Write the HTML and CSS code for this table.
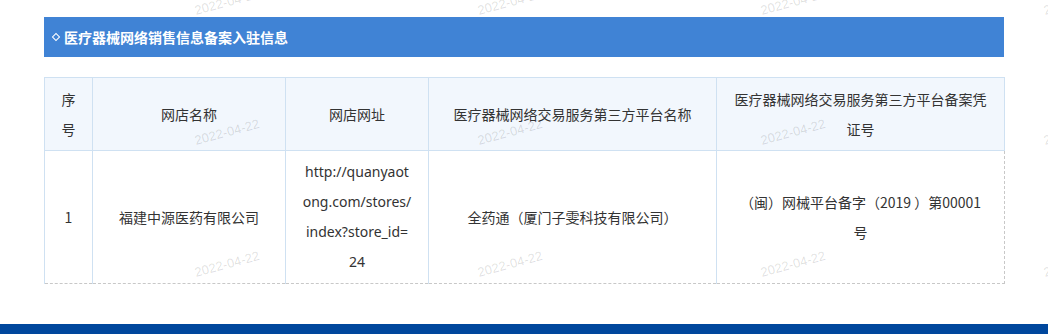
FILE: index.html
```html
<!DOCTYPE html>
<html lang="zh-CN">
<head>
<meta charset="utf-8">
<title>医疗器械网络销售信息备案入驻信息</title>
<link rel="stylesheet" href="styles.css">
</head>
<body>
<div class="page">
  <div class="wrap">
    <div class="title"><span class="diamond"></span><span class="title-text">医疗器械网络销售信息备案入驻信息</span></div>
    <table class="info">
      <colgroup>
        <col class="c1"><col class="c2"><col class="c3"><col class="c4"><col class="c5">
      </colgroup>
      <thead>
        <tr>
          <th>序号</th>
          <th>网店名称</th>
          <th>网店网址</th>
          <th>医疗器械网络交易服务第三方平台名称</th>
          <th>医疗器械网络交易服务第三方平台备案凭证号</th>
        </tr>
      </thead>
      <tbody>
        <tr>
          <td>1</td>
          <td>福建中源医药有限公司</td>
          <td class="url">http://quanyaotong.com/stores/index?store_id=24</td>
          <td>全药通（厦门子雯科技有限公司）</td>
          <td>（闽）网械平台备字（2019 ）第00001号</td>
        </tr>
      </tbody>
    </table>
  </div>
  <div class="footer"></div>
</div>
<div class="watermarks" aria-hidden="true">
  <span class="wm" style="left:227px;top:2px">2022-04-22</span>
  <span class="wm" style="left:510px;top:2px">2022-04-22</span>
  <span class="wm" style="left:793px;top:2px">2022-04-22</span>
  <span class="wm" style="left:1076px;top:2px">2022-04-22</span>
  <span class="wm" style="left:227px;top:132px">2022-04-22</span>
  <span class="wm" style="left:510px;top:132px">2022-04-22</span>
  <span class="wm" style="left:793px;top:132px">2022-04-22</span>
  <span class="wm" style="left:1076px;top:132px">2022-04-22</span>
  <span class="wm" style="left:227px;top:264px">2022-04-22</span>
  <span class="wm" style="left:510px;top:264px">2022-04-22</span>
  <span class="wm" style="left:793px;top:264px">2022-04-22</span>
  <span class="wm" style="left:1076px;top:264px">2022-04-22</span>
</div>
</body>
</html>
```

FILE: styles.css
```css
html, body {
  margin: 0;
  padding: 0;
  background: #fff;
}
body {
  font-family: "Noto Sans", "Noto Sans CJK SC", sans-serif;
  color: #333;
  font-size: 14px;
  overflow: hidden;
}
.page {
  position: relative;
}
.wrap {
  width: 960px;
  margin: 0 auto;
  padding-top: 17px;
}
.title {
  height: 40px;
  background: #4083d5;
  color: #fff;
  font-family: "Noto Sans CJK SC", sans-serif;
  font-weight: bold;
  font-size: 14px;
  display: flex;
  align-items: center;
  padding-left: 9px;
}
.diamond {
  width: 4px;
  height: 4px;
  border: 1px solid #fff;
  transform: rotate(45deg);
  margin-right: 5px;
}
.info {
  margin-top: 20px;
  width: 960px;
  table-layout: fixed;
  border-collapse: collapse;
}
.c1 { width: 48px; }
.c2 { width: 193px; }
.c3 { width: 143px; }
.c4 { width: 288px; }
.c5 { width: 288px; }
.info th, .info td {
  border: 1px solid #cfe1f2;
  padding: 6px 15px;
  line-height: 30px;
  text-align: center;
  font-weight: normal;
  font-size: 14px;
  color: #333;
  font-family: "Noto Sans CJK SC", sans-serif;
}
.info th {
  background: #f2f7fd;
}
.info td {
  word-break: break-all;
  padding: 6px 19px;
}
.info td.url {
  font-family: "Noto Sans", "Noto Sans CJK SC", sans-serif;
  padding: 6px 16px;
}
.info tbody td:last-child {
  border-right: 1px dashed #c8c8c8;
}
.info tbody tr:last-child td {
  border-bottom: 1px dashed #c8c8c8;
}
.footer {
  margin-top: 40px;
  height: 20px;
  background: #00479d;
}
.watermarks {
  position: absolute;
  left: 0;
  top: 0;
  width: 1048px;
  height: 334px;
  pointer-events: none;
  overflow: hidden;
}
.wm {
  position: absolute;
  transform: translate(-50%, -50%) rotate(-15deg);
  font-family: "Liberation Sans", Arial, sans-serif;
  font-size: 13px;
  color: rgba(0, 0, 0, 0.13);
  white-space: nowrap;
}
```
